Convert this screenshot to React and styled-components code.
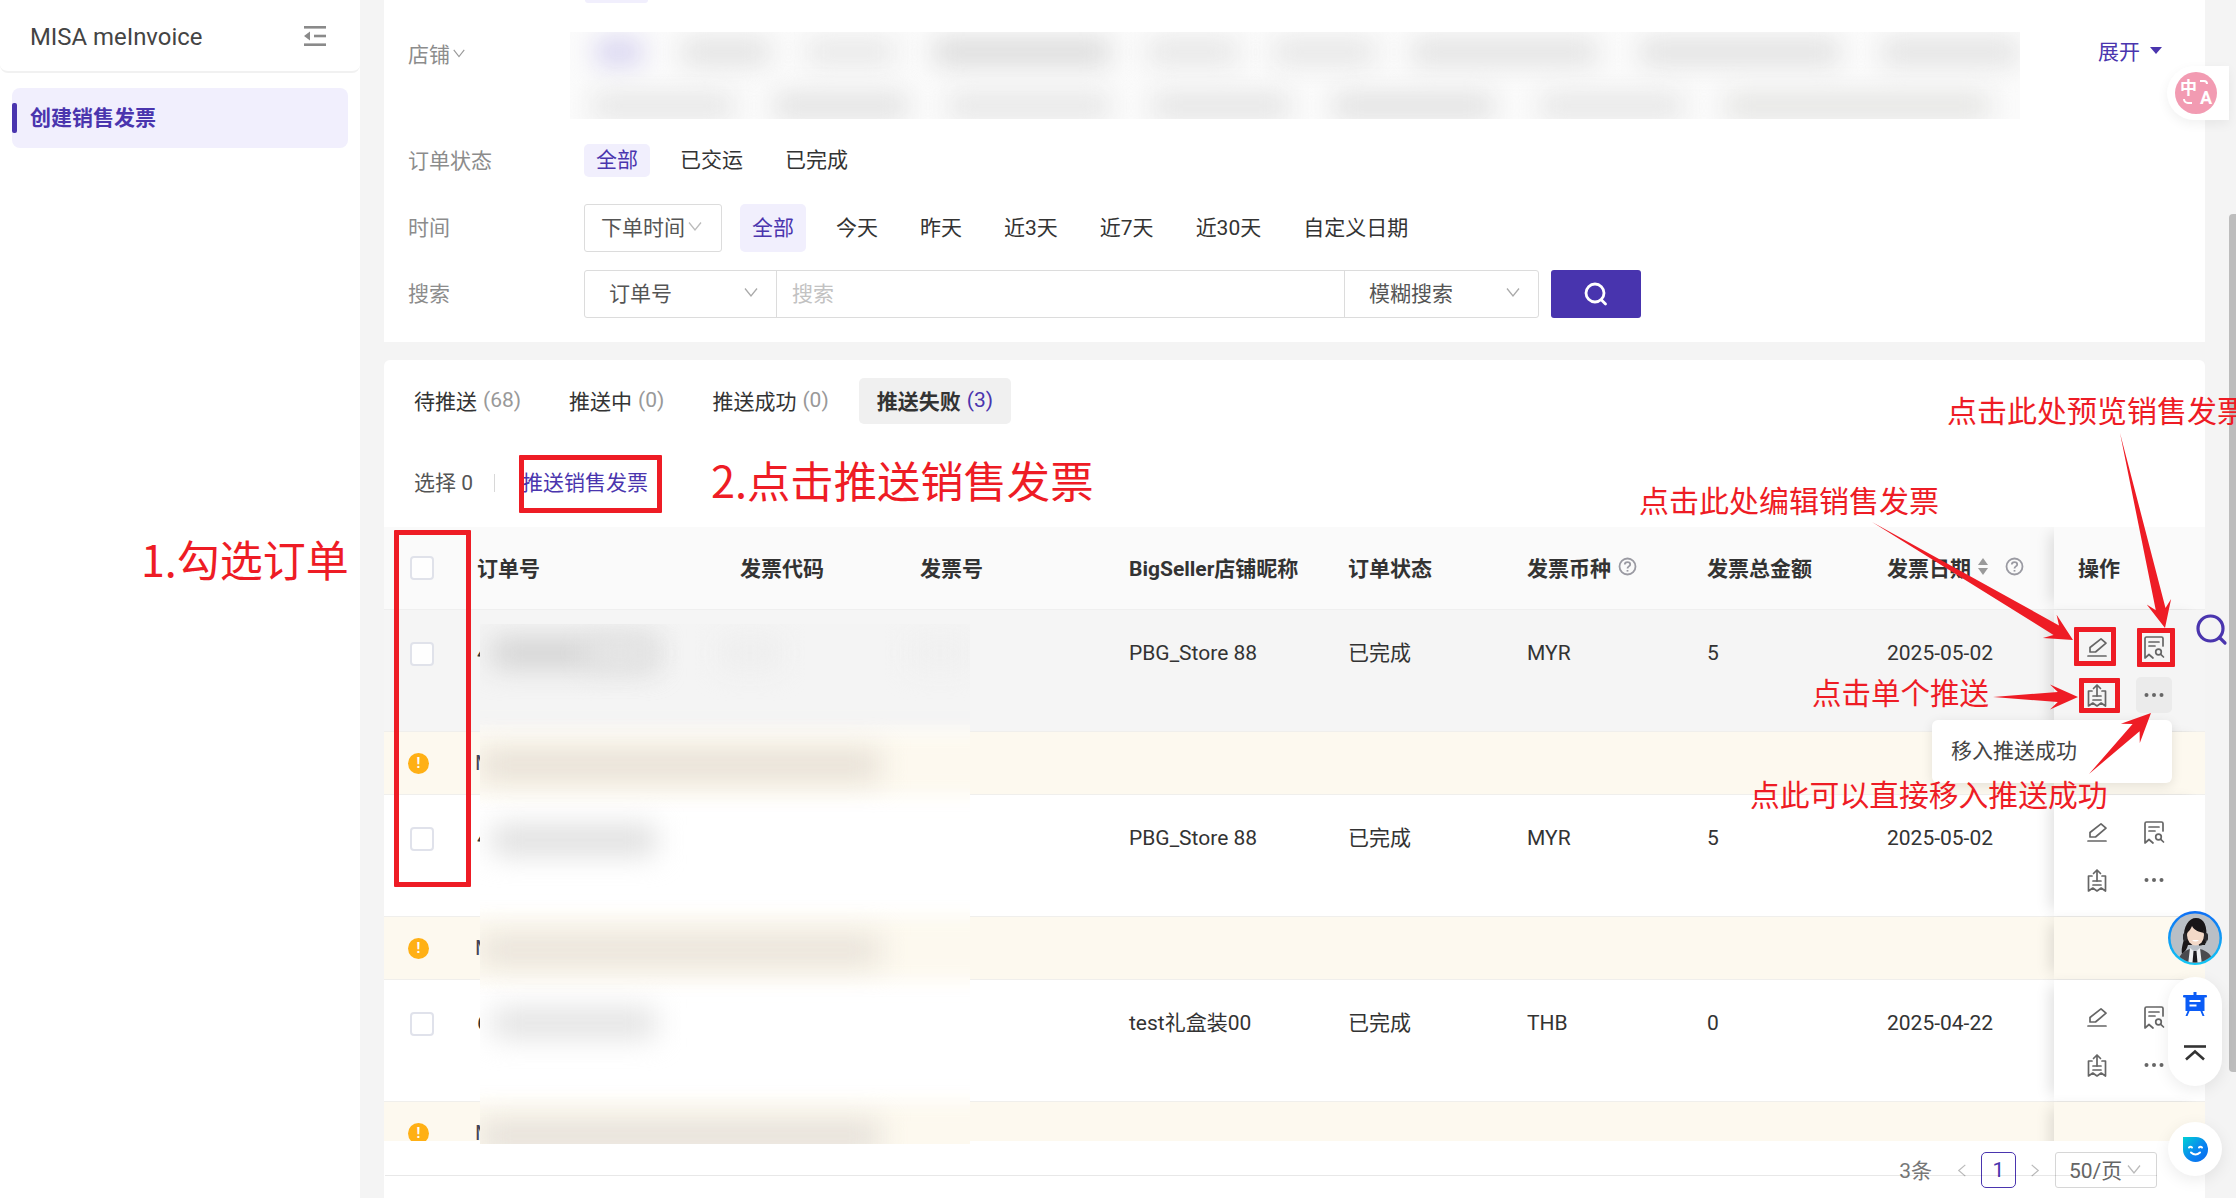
import React from "react";
import styled, { createGlobalStyle } from "styled-components";

const FONT = `Roboto, "Noto Sans CJK SC", sans-serif`;
const PURPLE = "#4a35ae";
const RED = "#ee1c25";
const COLS = "93px 263px 180px 209px 219px 179px 180px 180px 167px 151px";

const Global = createGlobalStyle`
  html, body { margin: 0; padding: 0; overflow: hidden; background: #f4f4f4; }
  * { box-sizing: border-box; }
`;

const Page = styled.div`
  position: relative;
  display: flex;
  width: 2236px;
  height: 1198px;
  overflow: hidden;
  background: #f4f4f4;
  font-family: ${FONT};
  font-size: 21px;
  color: #333;
`;

/* ---------- Sidebar ---------- */
const Sidebar = styled.aside`
  width: 360px;
  flex: none;
  background: #fff;
`;
const SideHead = styled.div`
  height: 73px;
  padding: 0 34px 0 30px;
  display: flex;
  align-items: center;
  justify-content: space-between;
  border-bottom: 2px solid #f1f1f1;
  border-radius: 0 0 8px 8px;
`;
const Brand = styled.div`
  font-size: 23.9px;
  color: #444;
  padding-top: 3px;
`;
const SideItem = styled.div`
  position: relative;
  margin: 15px 12px 0;
  height: 60px;
  padding: 0 0 5px 18px;
  display: flex;
  align-items: center;
  border-radius: 8px;
  background: #f1effd;
  color: ${PURPLE};
  font-weight: 700;
  &::before {
    content: "";
    position: absolute;
    left: 0;
    top: 15px;
    width: 5px;
    height: 30px;
    border-radius: 2px;
    background: ${PURPLE};
  }
`;

/* ---------- Main column ---------- */
const Main = styled.main`
  width: 1821px;
  margin-left: 24px;
  display: flex;
  flex-direction: column;
`;
const FilterPanel = styled.section`
  position: relative;
  height: 342px;
  flex: none;
  padding: 32px 24px 0;
  background: #fff;
  &::before {
    content: "";
    position: absolute;
    left: 201px;
    top: 0;
    width: 63px;
    height: 3px;
    background: #f1effd;
    border-radius: 0 0 3px 3px;
  }
`;
const ShopRow = styled.div`
  display: flex;
  align-items: flex-start;
  height: 87px;
`;
const ShopLabel = styled.div`
  width: 162px;
  flex: none;
  height: 42px;
  display: flex;
  align-items: center;
  gap: 2px;
  color: #8c8c8c;
`;
const BlurBox = styled.div`
  width: 1450px;
  height: 87px;
  flex: none;
  overflow: hidden;
  background: #fbfbfb;
  display: flex;
  flex-direction: column;
  gap: 28px;
  padding-top: 7px;
`;
const BlurLine = styled.div`
  display: flex;
  height: 26px;
`;
const BlurChip = styled.div`
  flex: none;
  height: 26px;
  width: ${(p) => p.$w}px;
  margin-left: ${(p) => p.$ml}px;
  background: ${(p) => p.$c};
  filter: blur(13px);
`;
const Expand = styled.div`
  margin-left: 78px;
  height: 36px;
  display: flex;
  align-items: center;
  gap: 10px;
  color: ${PURPLE};
`;
const Triangle = styled.span`
  width: 0;
  height: 0;
  border-left: 6px solid transparent;
  border-right: 6px solid transparent;
  border-top: 7px solid ${PURPLE};
`;
const FormRow = styled.div`
  display: flex;
  align-items: center;
  height: ${(p) => p.$h}px;
  margin-top: ${(p) => p.$mt}px;
`;
const FormLabel = styled.div`
  width: 176px;
  flex: none;
  padding-bottom: 4px;
  color: #8c8c8c;
`;
const Options = styled.div`
  display: flex;
  align-items: center;
  gap: 18px;
  height: 100%;
`;
const Option = styled.div`
  height: 100%;
  padding: 0 12px 5px;
  display: flex;
  align-items: center;
  border-radius: 5px;
  color: ${(p) => (p.$on ? PURPLE : "#333")};
  background: ${(p) => (p.$on ? "#f1effd" : "transparent")};
`;
const TimeSelect = styled.div`
  width: 138px;
  height: 48px;
  padding: 0 0 5px 16px;
  display: flex;
  align-items: center;
  gap: 2px;
  border: 1px solid #dcdcdc;
  border-radius: 3px;
  color: #555;
`;
const SearchGroup = styled.div`
  display: flex;
  width: 955px;
  height: 48px;
  border: 1px solid #dcdcdc;
  border-radius: 3px;
`;
const GroupSelect = styled.div`
  width: ${(p) => p.$w}px;
  flex: none;
  padding: 0 17px 5px ${(p) => p.$pl}px;
  display: flex;
  align-items: center;
  justify-content: space-between;
  color: #555;
  border-left: ${(p) => (p.$divider ? "1px solid #dcdcdc" : "none")};
`;
const Placeholder = styled.div`
  flex: 1;
  padding: 0 0 5px 15px;
  display: flex;
  align-items: center;
  color: #c2c2c2;
  border-left: 1px solid #dcdcdc;
`;
const SearchButton = styled.button`
  width: 90px;
  height: 48px;
  margin-left: 12px;
  padding: 0;
  border: none;
  border-radius: 3px;
  background: #4834ae;
  display: flex;
  align-items: center;
  justify-content: center;
`;

/* ---------- Table panel ---------- */
const ListPanel = styled.section`
  margin-top: 18px;
  flex: 1;
  min-height: 0;
  display: flex;
  flex-direction: column;
  background: #fff;
  border-radius: 6px 6px 0 0;
  overflow: hidden;
`;
const Tabs = styled.div`
  display: flex;
  gap: 12px;
  height: 46px;
  flex: none;
  margin: 18px 0 0 12px;
`;
const Tab = styled.div`
  padding: 0 18px 3px;
  display: flex;
  align-items: center;
  gap: 6px;
  border-radius: 5px;
  font-weight: ${(p) => (p.$on ? 700 : 400)};
  background: ${(p) => (p.$on ? "#f0f0f0" : "transparent")};
  & > span {
    font-weight: 400;
    color: ${(p) => (p.$on ? PURPLE : "#999")};
  }
`;
const Toolbar = styled.div`
  height: 103px;
  flex: none;
  padding: 10px 0 0 30px;
  display: flex;
  align-items: center;
`;
const Selected = styled.div`
  color: #555;
  width: 80px;
`;
const ToolDivider = styled.div`
  width: 1px;
  height: 18px;
  margin-top: 5px;
  background: #d8d8d8;
  margin-right: 27px;
`;
const ToolAction = styled.div`
  color: ${PURPLE};
`;
const TableWrap = styled.div`
  flex: 1;
  min-height: 0;
  overflow: hidden;
`;
const HeadRow = styled.div`
  display: grid;
  grid-template-columns: ${COLS};
  height: 83px;
  background: #fafafa;
  border-bottom: 1px solid #efefef;
  font-weight: 700;
`;
const HeadCell = styled.div`
  display: flex;
  align-items: center;
  white-space: nowrap;
  padding-bottom: 3px;
`;
const HeadGap = styled.span`
  flex: none;
  width: ${(p) => p.$w}px;
`;
const CheckCell = styled.div`
  display: flex;
  align-items: center;
  padding-left: 26px;
`;
const OpsHead = styled(HeadCell)`
  position: relative;
  padding-left: 24px;
  background: #fafafa;
  box-shadow: -10px 0 14px -6px rgba(0, 0, 0, 0.12);
`;
const Check = styled.span`
  display: block;
  width: 24px;
  height: 24px;
  background: #fff;
  border: 2px solid #dfe1ea;
  border-radius: 4px;
  opacity: 0.95;
`;
const BodyRow = styled.div`
  display: grid;
  grid-template-columns: ${COLS};
  height: 121px;
  background: ${(p) => (p.$hover ? "#f5f5f5" : "#fff")};
`;
const BodyCell = styled.div`
  padding-top: 28px;
  line-height: 30px;
  white-space: nowrap;
  color: #333;
`;
const BodyCheck = styled(BodyCell)`
  padding: 32px 0 0 26px;
`;
const OpsCell = styled.div`
  position: relative;
  padding: 19px 0 0 25px;
  background: ${(p) => (p.$hover ? "#f5f5f5" : "#fff")};
  box-shadow: -10px 0 14px -6px rgba(0, 0, 0, 0.12);
  display: grid;
  grid-template-columns: 36px 36px;
  grid-auto-rows: 36px;
  column-gap: 21px;
  row-gap: 12px;
`;
const OpButton = styled.div`
  display: flex;
  align-items: center;
  justify-content: center;
  border-radius: 5px;
  background: ${(p) => (p.$on ? "#ebebeb" : "transparent")};
`;
const WarnRow = styled.div`
  display: flex;
  justify-content: space-between;
  height: 64px;
  background: #fdf9ef;
  border-top: 1px solid #f0efec;
  border-bottom: 1px solid #f0efec;
`;
const WarnMain = styled.div`
  display: flex;
  align-items: center;
  padding-left: 24px;
  gap: 46px;
  color: #445;
`;
const WarnDot = styled.span`
  width: 21px;
  height: 21px;
  border-radius: 50%;
  background: #ffb015;
  color: #fff;
  font-size: 14px;
  font-weight: 700;
  display: flex;
  align-items: center;
  justify-content: center;
`;
const WarnFixed = styled.div`
  position: relative;
  width: 151px;
  background: #fdf9ef;
  box-shadow: -10px 0 14px -6px rgba(0, 0, 0, 0.12);
`;
const Footer = styled.footer`
  position: relative;
  height: 57px;
  flex: none;
  padding: 11px 48px 0 0;
  display: flex;
  justify-content: flex-end;
  align-items: flex-start;
  background: #fff;
  &::after {
    content: "";
    position: absolute;
    left: 1px;
    right: 48px;
    top: 34px;
    height: 1px;
    background: rgba(0, 0, 0, 0.09);
  }
`;
const Total = styled.div`
  height: 36px;
  padding-bottom: 3px;
  display: flex;
  align-items: center;
  color: #777;
  margin-right: 23px;
`;
const PageNav = styled.div`
  height: 36px;
  display: flex;
  align-items: center;
`;
const PageNumber = styled.div`
  width: 35px;
  height: 36px;
  margin: 0 11px 0 11px;
  display: flex;
  align-items: center;
  justify-content: center;
  border: 1.5px solid ${PURPLE};
  border-radius: 5px;
  color: ${PURPLE};
`;
const SizeSelect = styled.div`
  width: 102px;
  height: 36px;
  margin-left: 13px;
  padding: 0 14px 2px 13px;
  display: flex;
  align-items: center;
  justify-content: space-between;
  border: 1px solid #d6d6d6;
  border-radius: 3px;
  color: #666;
`;

/* ---------- Overlays ---------- */
const Scrollbar = styled.div`
  position: absolute;
  left: 2229px;
  top: 214px;
  width: 7px;
  height: 858px;
  background: #bdbdbd;
  border-radius: 4px 0 0 4px;
`;
const Patch = styled.div`
  position: absolute;
  left: 480px;
  top: 624px;
  width: 490px;
  height: 520px;
  overflow: hidden;
  background: #fff;
`;
const PatchBand = styled.div`
  position: absolute;
  left: -40px;
  right: -40px;
  top: ${(p) => p.$t}px;
  height: ${(p) => p.$h}px;
  background: ${(p) => p.$c};
  filter: blur(9px);
`;
const PatchBar = styled.div`
  position: absolute;
  left: ${(p) => p.$l}px;
  top: ${(p) => p.$t}px;
  width: ${(p) => p.$w}px;
  height: 30px;
  background: ${(p) => p.$c};
  filter: blur(14px);
`;
const Popup = styled.div`
  position: absolute;
  left: 1932px;
  top: 720px;
  width: 240px;
  height: 63px;
  padding: 0 0 5px 19px;
  display: flex;
  align-items: center;
  background: #fff;
  border-radius: 6px;
  box-shadow: 0 3px 12px rgba(0, 0, 0, 0.1);
  color: #444;
`;
const RedBox = styled.div`
  position: absolute;
  left: ${(p) => p.$x}px;
  top: ${(p) => p.$y}px;
  width: ${(p) => p.$w}px;
  height: ${(p) => p.$h}px;
  border: 5px solid ${RED};
  border-radius: 1px;
`;
const Note = styled.div`
  position: absolute;
  left: ${(p) => p.$x}px;
  top: ${(p) => p.$y - p.$s / 2}px;
  font-family: "Noto Sans CJK SC", Roboto, sans-serif;
  font-size: ${(p) => p.$s}px;
  font-weight: 400;
  line-height: 1;
  color: ${RED};
  white-space: nowrap;
`;
const ArrowLayer = styled.svg`
  position: absolute;
  left: 0;
  top: 0;
  width: 2236px;
  height: 1198px;
  pointer-events: none;
`;
const SearchFloat = styled.svg`
  position: absolute;
  left: 2194px;
  top: 613px;
`;
const TranslatePill = styled.div`
  position: absolute;
  left: 2167px;
  top: 66px;
  width: 62px;
  height: 54px;
  display: flex;
  align-items: center;
  padding-left: 8px;
  background: #fff;
  border-radius: 27px 0 0 27px;
  box-shadow: 0 4px 12px rgba(0, 0, 0, 0.06);
`;
const TranslateDot = styled.div`
  position: relative;
  width: 42px;
  height: 42px;
  border-radius: 50%;
  background: #f29bb2;
  color: #fff;
  font-weight: 700;
  font-size: 17px;
  line-height: 1;
`;
const Han = styled.span`
  position: absolute;
  left: 5px;
  top: 6px;
  font-family: "Noto Sans CJK SC", sans-serif;
`;
const Latin = styled.span`
  position: absolute;
  right: 5px;
  bottom: 7px;
  font-size: 18px;
`;
const Marks = styled.svg`
  position: absolute;
  inset: 0;
`;
const FloatAvatar = styled.svg`
  position: absolute;
  left: 2168px;
  top: 911px;
`;
const FloatPill = styled.div`
  position: absolute;
  left: 2168px;
  top: 977px;
  width: 54px;
  height: 109px;
  padding: 15px 0 0;
  display: flex;
  flex-direction: column;
  align-items: center;
  gap: 29px;
  border-radius: 27px;
  background: #fff;
  box-shadow: 0 4px 16px rgba(0, 0, 0, 0.08);
`;
const FloatRound = styled.div`
  position: absolute;
  left: 2168px;
  top: 1122px;
  width: 54px;
  height: 54px;
  display: flex;
  align-items: center;
  justify-content: center;
  border-radius: 50%;
  background: #fff;
  box-shadow: 0 4px 16px rgba(0, 0, 0, 0.08);
`;
const SvgBox = styled.svg`
  display: block;
  flex: none;
`;

/* ---------- Icons ---------- */
const Chevron = ({ size = 15, color = "#aaa", dir = "down" }) => (
  <SvgBox width={size} height={size} viewBox="0 0 16 16" fill="none" stroke={color} strokeWidth="1.3">
    {dir === "down" && <path d="M2 4.5 8 12l6-7.5" />}
    {dir === "left" && <path d="M11 2 4 8l7 6" />}
    {dir === "right" && <path d="M5 2l7 6-7 6" />}
  </SvgBox>
);
const CollapseIcon = () => (
  <SvgBox width="22" height="20" viewBox="0 0 22 20" fill="#8a8a8a">
    <rect x="0" y="0" width="22" height="2.6" />
    <rect x="0" y="17.4" width="22" height="2.6" />
    <rect x="10" y="8.7" width="12" height="2.6" />
    <path d="M0 10l6-4.5v9z" />
  </SvgBox>
);
const Help = () => (
  <SvgBox width="19" height="19" viewBox="0 0 19 19" fill="none" stroke="#9a9aa2" strokeWidth="1.8">
    <circle cx="9.5" cy="9.5" r="8" />
    <path d="M6.8 7.6c0-1.6 1.2-2.5 2.7-2.5s2.7.9 2.7 2.3c0 2-2.7 2-2.7 4" />
    <path d="M9.5 13v1.6" />
  </SvgBox>
);
const Sort = () => (
  <SvgBox width="12" height="17" viewBox="0 0 12 17" fill="#9a9a9a">
    <path d="M6 0l5 7H1z" />
    <path d="M6 17l5-7H1z" />
  </SvgBox>
);
const IconEdit = () => (
  <SvgBox width="36" height="36" viewBox="0 0 36 36" fill="none" stroke="#666" strokeWidth="1.7" strokeLinejoin="round" strokeLinecap="round">
    <path d="M11 23v-4.5L22 9.8l5 4.4L16.5 23z" />
    <path d="M9 27h18" />
  </SvgBox>
);
const IconPreview = () => (
  <SvgBox width="36" height="36" viewBox="0 0 36 36" fill="none" stroke="#666" strokeWidth="1.7" strokeLinejoin="round" strokeLinecap="round">
    <path d="M27 17V9.5A1.5 1.5 0 0 0 25.5 8h-15A1.5 1.5 0 0 0 9 9.5V29l4-3.5 4 3.5" />
    <path d="M13 13h10M13 17h6" />
    <circle cx="22.5" cy="23" r="2.8" />
    <path d="M24.8 25.4 27.5 28" />
  </SvgBox>
);
const IconPush = () => (
  <SvgBox width="36" height="36" viewBox="0 0 36 36" fill="none" stroke="#666" strokeWidth="1.7" strokeLinejoin="round" strokeLinecap="round">
    <path d="M13 14H9.5v15l4.3-3 4.2 3 4.2-3 4.3 3V14H23" />
    <path d="M18 19V8M14.5 11.5 18 8l3.5 3.5" />
    <path d="M14 19h8M14 23h8" />
  </SvgBox>
);
const IconMore = () => (
  <SvgBox width="20" height="6" viewBox="0 0 20 6" fill="#666">
    <circle cx="2.5" cy="3" r="2" />
    <circle cx="10" cy="3" r="2" />
    <circle cx="17.5" cy="3" r="2" />
  </SvgBox>
);
const IconSearch = () => (
  <SvgBox width="26" height="26" viewBox="0 0 26 26" fill="none" stroke="#fff" strokeWidth="2.8" strokeLinecap="round">
    <circle cx="12" cy="12" r="9" />
    <path d="M18.5 19l4 4" />
  </SvgBox>
);
const IconBoard = () => (
  <SvgBox width="24" height="24" viewBox="0 0 24 24" fill="#0b5cf6">
    <rect x="0" y="3" width="24" height="2.5" rx="1" />
    <rect x="2.5" y="3" width="19" height="16" />
    <rect x="10.5" y="0" width="3" height="4" />
    <path d="M5 18l-2.5 6h2L7 18zM19 18l2.5 6h-2L17 18z" />
    <rect x="6.5" y="8" width="11" height="2" fill="#fff" />
    <rect x="6.5" y="12.5" width="7" height="2" fill="#fff" />
  </SvgBox>
);
const IconTop = () => (
  <SvgBox width="22" height="16" viewBox="0 0 22 16" fill="none" stroke="#333" strokeWidth="2.6">
    <path d="M0 1.5h22" />
    <path d="M2 14.5 11 6.5l9 8" />
  </SvgBox>
);
const IconFace = () => (
  <SvgBox width="25" height="25" viewBox="0 0 25 25">
    <defs>
      <linearGradient id="faceGrad" x1="0" y1="0" x2="1" y2="1">
        <stop offset="0" stopColor="#00d0d4" />
        <stop offset="0.55" stopColor="#0a86f0" />
        <stop offset="1" stopColor="#0768f0" />
      </linearGradient>
    </defs>
    <path d="M0 0h13a12 12 0 0 1 12 12.5A12.5 12.5 0 0 1 0 12.5z" fill="url(#faceGrad)" />
    <g fill="none" stroke="#fff" strokeWidth="2" strokeLinecap="round">
      <path d="M6 10.5q1.5-1.5 3 0M16 10.5q1.5-1.5 3 0" />
      <path d="M8 15.5q4.5 4 9 0" />
    </g>
  </SvgBox>
);

/* ---------- Arrows ---------- */
function arrowPoints([x1, y1], [x2, y2], shaft, headLen, headW) {
  const d = Math.hypot(x2 - x1, y2 - y1);
  const ux = (x2 - x1) / d;
  const uy = (y2 - y1) / d;
  const nx = -uy;
  const ny = ux;
  const at = (back, side) => `${(x2 - ux * back + nx * side).toFixed(1)},${(y2 - uy * back + ny * side).toFixed(1)}`;
  return [
    `${x1},${y1}`,
    at(headLen * 0.72, shaft / 2),
    at(headLen, headW / 2),
    `${x2},${y2}`,
    at(headLen, -headW / 2),
    at(headLen * 0.72, -shaft / 2),
  ].join(" ");
}
const ARROWS = [
  [[1872, 522], [2073, 640], 11, 27, 27],
  [[2120, 433], [2165, 628], 10, 27, 25],
  [[1993, 697], [2078, 697], 10, 28, 25],
  [[2089, 774], [2151, 713], 10, 29, 27],
];

/* ---------- Data ---------- */
const SHOP_ROWS = [
  [
    [26, 46, "#d6d2f0"], [40, 88, "#e2e2e2"], [37, 88, "#e8e8e8"], [39, 176, "#dadada"], [38, 90, "#e6e6e6"],
    [35, 103, "#e6e6e6"], [36, 185, "#e2e2e2"], [43, 200, "#e1e1e1"], [42, 136, "#e2e2e2"],
  ],
  [
    [22, 142, "#e6e6e6"], [40, 134, "#e2e2e2"], [40, 162, "#e6e6e6"], [42, 138, "#e4e4e4"], [43, 161, "#e1e1e1"],
    [46, 143, "#e6e6e6"], [42, 265, "#e4e4e2"],
  ],
];
const HEADS = ["发票代码", "发票号", "BigSeller店铺昵称", "订单状态"];
const ROWS = [
  { id: "4", shop: "PBG_Store 88", cur: "MYR", amt: "5", date: "2025-05-02", hover: true },
  { id: "4", shop: "PBG_Store 88", cur: "MYR", amt: "5", date: "2025-05-02" },
  { id: "6", shop: "test礼盒装00", cur: "THB", amt: "0", date: "2025-04-22" },
];
const PATCH_BANDS = [
  [-30, 138, "#f4f4f4"],
  [108, 64, "#fdf9ef"],
  [292, 65, "#fdf9ef"],
  [477, 80, "#fdf9ef"],
];
const PATCH_BARS = [
  [12, 14, 164, "#d2d2d2"], [105, 14, 70, "#e8e8e8"], [240, 14, 60, "#ededed"], [430, 14, 60, "#efefef"],
  [0, 126, 400, "#e6dfd5"], [12, 201, 164, "#dedede"], [0, 311, 400, "#e8e2d9"], [12, 384, 164, "#e2e2e2"], [0, 497, 400, "#e4dfd8"],
];
const REDBOXES = [
  { x: 519, y: 455, w: 143, h: 58 },
  { x: 394, y: 530, w: 77, h: 357 },
  { x: 2074, y: 627, w: 42, h: 39 },
  { x: 2137, y: 628, w: 38, h: 39 },
  { x: 2079, y: 678, w: 41, h: 35 },
];
const NOTES = [
  { x: 141, y: 558, s: 43, t: "1.勾选订单" },
  { x: 711, y: 480, s: 43.3, t: "2.点击推送销售发票" },
  { x: 1947, y: 409, s: 30, t: "点击此处预览销售发票" },
  { x: 1639, y: 499, s: 30, t: "点击此处编辑销售发票" },
  { x: 1812, y: 692, s: 29.5, t: "点击单个推送" },
  { x: 1750, y: 794, s: 29.8, t: "点此可以直接移入推送成功" },
];

export default function App() {
  return (
    <Page>
      <Global />
      <Sidebar>
        <SideHead>
          <Brand>MISA meInvoice</Brand>
          <CollapseIcon />
        </SideHead>
        <SideItem>创建销售发票</SideItem>
      </Sidebar>

      <Main>
        <FilterPanel>
          <ShopRow>
            <ShopLabel>
              店铺
              <Chevron size={14} color="#999" />
            </ShopLabel>
            <BlurBox>
              {SHOP_ROWS.map((line, i) => (
                <BlurLine key={i}>
                  {line.map(([ml, w, c], j) => (
                    <BlurChip key={j} $ml={ml} $w={w} $c={c} />
                  ))}
                </BlurLine>
              ))}
            </BlurBox>
            <Expand>
              展开
              <Triangle />
            </Expand>
          </ShopRow>
          <FormRow $h={33} $mt={25}>
            <FormLabel>订单状态</FormLabel>
            <Options>
              <Option $on>全部</Option>
              <Option>已交运</Option>
              <Option>已完成</Option>
            </Options>
          </FormRow>
          <FormRow $h={48} $mt={27}>
            <FormLabel>时间</FormLabel>
            <Options>
              <TimeSelect>
                下单时间
                <Chevron size={16} color="#bbb" />
              </TimeSelect>
              <Option $on>全部</Option>
              <Option>今天</Option>
              <Option>昨天</Option>
              <Option>近3天</Option>
              <Option>近7天</Option>
              <Option>近30天</Option>
              <Option>自定义日期</Option>
            </Options>
          </FormRow>
          <FormRow $h={48} $mt={18}>
            <FormLabel>搜索</FormLabel>
            <SearchGroup>
              <GroupSelect $w={191} $pl={24}>
                订单号
                <Chevron size={16} color="#aaa" />
              </GroupSelect>
              <Placeholder>搜索</Placeholder>
              <GroupSelect $w={194} $pl={24} $divider>
                模糊搜索
                <Chevron size={16} color="#aaa" />
              </GroupSelect>
            </SearchGroup>
            <SearchButton aria-label="搜索">
              <IconSearch />
            </SearchButton>
          </FormRow>
        </FilterPanel>

        <ListPanel>
          <Tabs>
            <Tab>
              待推送 <span>(68)</span>
            </Tab>
            <Tab>
              推送中 <span>(0)</span>
            </Tab>
            <Tab>
              推送成功 <span>(0)</span>
            </Tab>
            <Tab $on>
              推送失败 <span>(3)</span>
            </Tab>
          </Tabs>
          <Toolbar>
            <Selected>选择 0</Selected>
            <ToolDivider />
            <ToolAction>推送销售发票</ToolAction>
          </Toolbar>

          <TableWrap>
            <HeadRow>
              <CheckCell>
                <Check />
              </CheckCell>
              <HeadCell>订单号</HeadCell>
              {HEADS.map((h) => (
                <HeadCell key={h}>{h}</HeadCell>
              ))}
              <HeadCell>
                发票币种
                <HeadGap $w={7} />
                <Help />
              </HeadCell>
              <HeadCell>发票总金额</HeadCell>
              <HeadCell>
                发票日期
                <HeadGap $w={6} />
                <Sort />
                <HeadGap $w={16} />
                <Help />
              </HeadCell>
              <OpsHead>操作</OpsHead>
            </HeadRow>

            {ROWS.map((r, i) => (
              <React.Fragment key={i}>
                <BodyRow $hover={r.hover}>
                  <BodyCheck>
                    <Check />
                  </BodyCheck>
                  <BodyCell>{r.id}</BodyCell>
                  <BodyCell />
                  <BodyCell />
                  <BodyCell>{r.shop}</BodyCell>
                  <BodyCell>已完成</BodyCell>
                  <BodyCell>{r.cur}</BodyCell>
                  <BodyCell>{r.amt}</BodyCell>
                  <BodyCell>{r.date}</BodyCell>
                  <OpsCell $hover={r.hover}>
                    <OpButton>
                      <IconEdit />
                    </OpButton>
                    <OpButton>
                      <IconPreview />
                    </OpButton>
                    <OpButton>
                      <IconPush />
                    </OpButton>
                    <OpButton $on={r.hover}>
                      <IconMore />
                    </OpButton>
                  </OpsCell>
                </BodyRow>
                <WarnRow>
                  <WarnMain>
                    <WarnDot>!</WarnDot>
                    <span>M</span>
                  </WarnMain>
                  <WarnFixed />
                </WarnRow>
              </React.Fragment>
            ))}
          </TableWrap>

          <Footer>
            <Total>3条</Total>
            <PageNav>
              <Chevron size={15} color="#bbb" dir="left" />
              <PageNumber>1</PageNumber>
              <Chevron size={15} color="#bbb" dir="right" />
            </PageNav>
            <SizeSelect>
              50/页
              <Chevron size={16} color="#bbb" />
            </SizeSelect>
          </Footer>
        </ListPanel>
      </Main>

      <Scrollbar />

      <Patch>
        {PATCH_BANDS.map(([t, h, c], i) => (
          <PatchBand key={i} $t={t} $h={h} $c={c} />
        ))}
        {PATCH_BARS.map(([l, t, w, c], i) => (
          <PatchBar key={i} $l={l} $t={t} $w={w} $c={c} />
        ))}
      </Patch>

      <Popup>移入推送成功</Popup>

      <TranslatePill>
        <TranslateDot>
          <Han>中</Han>
          <Latin>A</Latin>
          <Marks viewBox="0 0 42 42" fill="none" stroke="#fff" strokeWidth="2">
            <path d="M25 9h4a3 3 0 0 1 3 3" />
            <path d="M9 27a4 4 0 0 0 4 4h4" />
          </Marks>
        </TranslateDot>
      </TranslatePill>

      <SearchFloat width="34" height="34" viewBox="0 0 34 34" fill="none" stroke={PURPLE} strokeWidth="3.2" strokeLinecap="round">
        <circle cx="16.5" cy="15.5" r="12.5" />
        <path d="M26 25l5 5" />
      </SearchFloat>

      <FloatAvatar width="54" height="54" viewBox="0 0 54 54">
        <defs>
          <linearGradient id="ring" x1="0" y1="0" x2="0" y2="1">
            <stop offset="0" stopColor="#0d6ef5" />
            <stop offset="1" stopColor="#12c8f5" />
          </linearGradient>
          <clipPath id="disc">
            <circle cx="27" cy="27" r="24.5" />
          </clipPath>
        </defs>
        <circle cx="27" cy="27" r="27" fill="url(#ring)" />
        <g clipPath="url(#disc)">
          <rect width="54" height="54" fill="#b9bfc6" />
          <path d="M14 43c-1-6 1-10 2-15-1-13 5-21 12-21 8 0 12 8 10 22l-1 5H20c-1 4-3 7-6 9z" fill="#191618" />
          <ellipse cx="27.5" cy="24" rx="8.5" ry="10.5" fill="#f3d9c8" />
          <path d="M19 22c0-6 4-10 8-10 5 0 9 4 9 10-5-1-10-3-12-7-1 3-3 5-5 7z" fill="#191618" />
          <path d="M9 54c1-9 6-14 13-16l5 3 5-3c8 2 13 7 14 16z" fill="#4a4a4e" />
          <path d="M22 37l5 4 5-4 2 17H20z" fill="#eef0f2" />
          <path d="M25.5 40h3l1.2 14h-5.4z" fill="#1b1b1f" />
          <rect x="15" y="22" width="4" height="8" rx="2" fill="#2a2a2e" />
          <rect x="36" y="22" width="4" height="8" rx="2" fill="#2a2a2e" />
          <path d="M38 30c0 2-3 4-7 4" fill="none" stroke="#222" strokeWidth="1.3" />
          <path d="M24 29q3.5 3 7 0z" fill="#fff" />
        </g>
      </FloatAvatar>

      <FloatPill>
        <IconBoard />
        <IconTop />
      </FloatPill>
      <FloatRound>
        <IconFace />
      </FloatRound>

      {REDBOXES.map((b, i) => (
        <RedBox key={i} $x={b.x} $y={b.y} $w={b.w} $h={b.h} />
      ))}
      <ArrowLayer viewBox="0 0 2236 1198">
        {ARROWS.map(([a, b, s, l, w], i) => (
          <polygon key={i} points={arrowPoints(a, b, s, l, w)} fill={RED} />
        ))}
      </ArrowLayer>
      {NOTES.map((n) => (
        <Note key={n.t} $x={n.x} $y={n.y} $s={n.s}>
          {n.t}
        </Note>
      ))}
    </Page>
  );
}
